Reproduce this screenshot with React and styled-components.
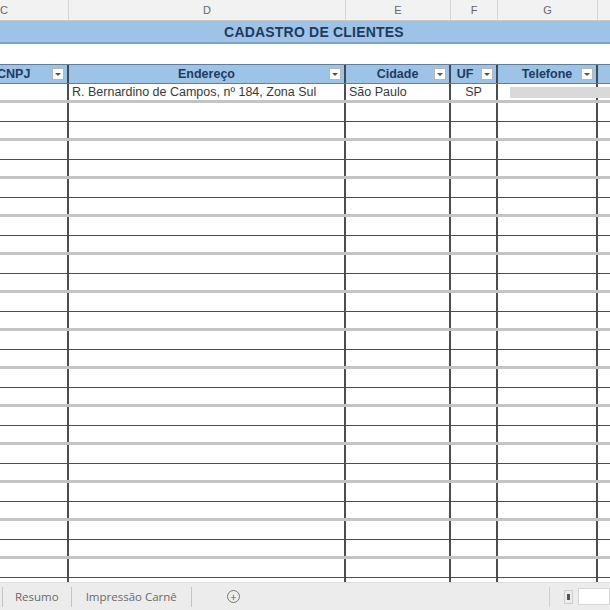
import styled, { createGlobalStyle } from 'styled-components'

const GlobalStyle = createGlobalStyle`
    html, body {
        margin: 0;
        padding: 0;
        background: #ffffff;
    }
    body {
        font-family: "Liberation Sans", Arial, sans-serif;
    }
`

const COLS = '129px 277px 105px 47px 100px 60px'

const Sheet = styled.div`
    width: 610px;
    height: 610px;
    display: flex;
    flex-direction: column;
    overflow: hidden;
`

const Grid = styled.div`
    flex: 1;
    width: 670px;
    margin-left: -60px;
    overflow: hidden;
    display: flex;
    flex-direction: column;
`

const Letters = styled.div`
    display: grid;
    grid-template-columns: ${COLS};
    height: 20px;
    background: #f2f2f2;
    border-bottom: 1px solid #c8c8c8;
    flex-shrink: 0;
`

const Letter = styled.div`
    border-right: 1px solid #d6d6d6;
    font-size: 11px;
    color: #666;
    display: flex;
    align-items: center;
    justify-content: center;
`

const Title = styled.div`
    height: 21px;
    background: #9dc3e6;
    border-bottom: 2px solid #7fa3c6;
    padding-left: 78px;
    display: flex;
    align-items: center;
    justify-content: center;
    font-weight: bold;
    font-size: 14px;
    color: #1f3a60;
    letter-spacing: 0.2px;
    flex-shrink: 0;
`

const Blank = styled.div`
    height: 20px;
    flex-shrink: 0;
`

const Row = styled.div`
    display: grid;
    grid-template-columns: ${COLS};
    height: 19px;
    flex-shrink: 0;
    box-sizing: border-box;
    border-bottom: ${p => (p.$dark ? '1.5px solid #4d4d4d' : '3px solid #c4c4c4')};
`

const HeadRow = styled(Row)`
    height: 20px;
    background: #9dc3e6;
    border-top: 1px solid #5f7f9f;
    border-bottom: 1px solid #5f7f9f;
`

const HeadCell = styled.div`
    position: relative;
    border-right: 2px solid #3f4a55;
    display: flex;
    align-items: center;
    justify-content: center;
    padding-right: ${p => p.$pad || 0}px;
    font-size: 12.5px;
    font-weight: bold;
    color: #1f3a60;
    white-space: nowrap;
`

const Filter = styled.span`
    position: absolute;
    right: 3px;
    top: 3px;
    width: 12px;
    height: 12px;
    box-sizing: border-box;
    background: #fff;
    border: 1px solid #b8b8b8;
    display: flex;
    align-items: center;
    justify-content: center;
    &::after {
        content: '';
        border-left: 3px solid transparent;
        border-right: 3px solid transparent;
        border-top: 3px solid #555;
    }
`

const Cell = styled.div`
    position: relative;
    border-right: 2px solid #4d4d4d;
    font-size: 12.5px;
    color: #3a3a3a;
    display: flex;
    align-items: center;
    justify-content: ${p => (p.$center ? 'center' : 'flex-start')};
    padding-left: ${p => (p.$center ? 0 : 3)}px;
    white-space: nowrap;
    overflow: visible;
`

const Masked = styled.span`
    position: absolute;
    left: 12px;
    top: 3px;
    width: 110px;
    height: 11px;
    background: #d9d9d9;
    z-index: 1;
`

const TabBar = styled.div`
    height: 27px;
    flex-shrink: 0;
    background: #ececec;
    border-top: 1px solid #dcdcdc;
    display: flex;
    align-items: center;
    padding-left: 2px;
    font-family: "Open Sans", "Liberation Sans", sans-serif;
    font-size: 11.5px;
    color: #6a6a6a;
`

const Tab = styled.div`
    height: 20px;
    display: flex;
    align-items: center;
    padding: 0 ${p => p.$pad}px;
    border-left: 1px solid #c4c4c4;
`

const AddSheet = styled.div`
    margin-left: 35px;
    width: 11px;
    height: 11px;
    border: 1px solid #777;
    border-radius: 50%;
    display: flex;
    align-items: center;
    justify-content: center;
    font-size: 11px;
    line-height: 1;
    color: #666;
`

const Spacer = styled.div`
    flex: 1;
`

const Scroll = styled.div`
    height: 20px;
    display: flex;
    align-items: center;
    border-left: 1px solid #cfcfcf;
    padding-left: 14px;
    gap: 5px;
`

const ScrollButton = styled.div`
    width: 9px;
    height: 14px;
    box-sizing: border-box;
    border: 1px solid #d0d0d0;
    display: flex;
    align-items: center;
    justify-content: center;
    &::after {
        content: '';
        width: 3px;
        height: 6px;
        background: #555;
    }
`

const ScrollTrack = styled.div`
    width: 30px;
    height: 15px;
    background: #fff;
    border: 1px solid #d6d6d6;
`

const emptyRows = Array.from({ length: 26 }, (_, i) => i)

const App = () => {
    return (
        <Sheet>
            <GlobalStyle />
            <Grid>
                <Letters>
                    <Letter>C</Letter>
                    <Letter>D</Letter>
                    <Letter>E</Letter>
                    <Letter>F</Letter>
                    <Letter>G</Letter>
                    <Letter />
                </Letters>
                <Title>CADASTRO DE CLIENTES</Title>
                <Blank />
                <HeadRow>
                    <HeadCell $pad={8}>CPF/CNPJ<Filter /></HeadCell>
                    <HeadCell>Endereço<Filter /></HeadCell>
                    <HeadCell>Cidade<Filter /></HeadCell>
                    <HeadCell $pad={17}>UF<Filter /></HeadCell>
                    <HeadCell>Telefone<Filter /></HeadCell>
                    <HeadCell />
                </HeadRow>
                <Row>
                    <Cell />
                    <Cell>R. Bernardino de Campos, nº 184, Zona Sul</Cell>
                    <Cell>São Paulo</Cell>
                    <Cell $center>SP</Cell>
                    <Cell><Masked /></Cell>
                    <Cell />
                </Row>
                {emptyRows.map(i => (
                    <Row key={i} $dark={i % 2 === 0}>
                        <Cell />
                        <Cell />
                        <Cell />
                        <Cell />
                        <Cell />
                        <Cell />
                    </Row>
                ))}
            </Grid>
            <TabBar>
                <Tab $pad={12}>Resumo</Tab>
                <Tab $pad={14}>Impressão Carnê</Tab>
                <Tab $pad={0} />
                <AddSheet>+</AddSheet>
                <Spacer />
                <Scroll>
                    <ScrollButton />
                    <ScrollTrack />
                </Scroll>
            </TabBar>
        </Sheet>
    )
}

export default App
